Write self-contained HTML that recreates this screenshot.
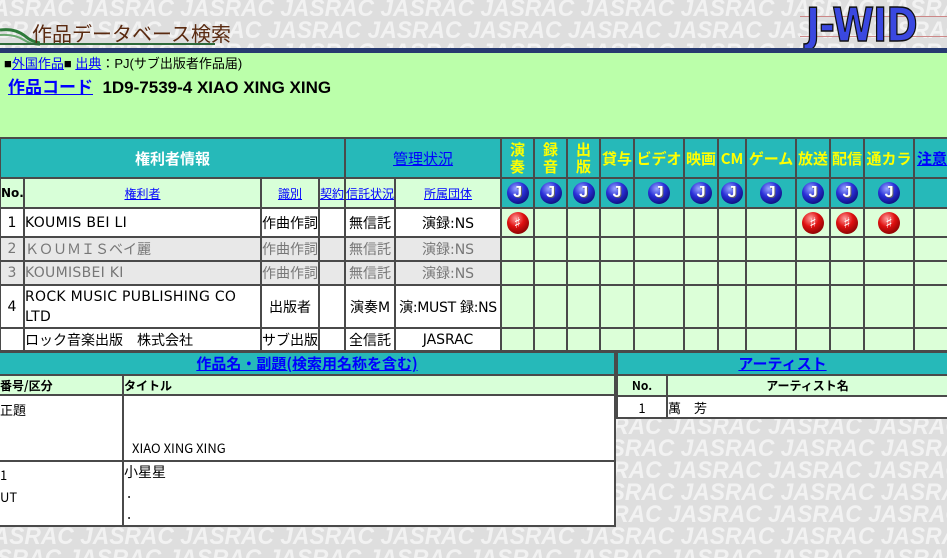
<!DOCTYPE html>
<html><head><meta charset="utf-8">
<style>
*{margin:0;padding:0;box-sizing:border-box}
html,body{width:947px;height:558px;overflow:hidden}
body{position:relative;background:#dedede;font-family:"Liberation Sans","Noto Sans CJK JP",sans-serif;font-size:14px;color:#000}
.bg{position:absolute;left:-20px;top:-2px;width:1100px;color:#f2f2f2;font:italic bold 24px/22px "Liberation Sans",sans-serif;white-space:nowrap;transform:scaleX(0.95);transform-origin:0 0}
.hdr{position:absolute;left:32px;top:20px;font-size:20px;color:#5a2a10;font-family:"Noto Sans CJK JP",sans-serif;line-height:26px}
.hline{position:absolute;left:0;top:43px;width:215px;height:2px;background:#2e6a3a}
.logo{position:absolute;left:806px;top:2px;font:bold 46px/46px "DejaVu Sans",sans-serif;color:#3a48e0;-webkit-text-stroke:1.5px #111;transform:scaleX(0.82);transform-origin:0 0;letter-spacing:-1px}
.navy{position:absolute;left:0;top:48px;width:947px;height:5px;background:#263a70}
.green{position:absolute;left:0;top:53px;width:947px;height:85px;background:#bbffaa}
a{color:#00f;text-decoration:underline}
table{border-collapse:collapse;position:absolute;table-layout:fixed}
td{border:2px solid #4a4a4a;text-align:center;vertical-align:middle;padding:0;overflow:hidden;white-space:nowrap;font-family:"DejaVu Sans","Noto Sans CJK JP",sans-serif;font-size:14px}
.th{background:#26b9b9}
.sub td,td.sub{background:#d8ffd8;font-size:12px}
.w{background:#fff}
.g{background:#e8e8e8;color:#777}
.c{background:#dcffd8}
.y{color:#ff0;font-weight:bold;font-size:15px;line-height:17px;font-family:"Noto Sans CJK JP",sans-serif}
.J{display:inline-block;width:22px;height:22px;border-radius:50%;background:radial-gradient(circle at 40% 30%,#9aa8ff 0,#2a30d8 40%,#0a0a70 85%);color:#fff;font:bold 16px/22px "Liberation Sans",sans-serif;vertical-align:middle;text-shadow:1px 1px 0 #666}
.R{display:inline-block;width:22px;height:22px;border-radius:50%;background:radial-gradient(circle at 40% 30%,#ffa0a0 0,#e01010 40%,#700000 90%);color:#fff;font:bold 15px/22px "DejaVu Sans",sans-serif;vertical-align:middle}
.l{text-align:left}
.n{font-family:"Noto Sans CJK JP",sans-serif;font-size:13px}
.d{letter-spacing:0.3px}
</style></head><body>
<div class="bg">
JASRAC JASRAC JASRAC JASRAC JASRAC JASRAC JASRAC JASRAC JASRAC JASRAC JASRAC<br>
ASRAC JASRAC JASRAC JASRAC JASRAC JASRAC JASRAC JASRAC JASRAC JASRAC JASRAC<br>
JASRAC JASRAC JASRAC JASRAC JASRAC JASRAC JASRAC JASRAC JASRAC JASRAC JASRAC<br>
ASRAC JASRAC JASRAC JASRAC JASRAC JASRAC JASRAC JASRAC JASRAC JASRAC JASRAC<br>
JASRAC JASRAC JASRAC JASRAC JASRAC JASRAC JASRAC JASRAC JASRAC JASRAC JASRAC<br>
ASRAC JASRAC JASRAC JASRAC JASRAC JASRAC JASRAC JASRAC JASRAC JASRAC JASRAC<br>
JASRAC JASRAC JASRAC JASRAC JASRAC JASRAC JASRAC JASRAC JASRAC JASRAC JASRAC<br>
ASRAC JASRAC JASRAC JASRAC JASRAC JASRAC JASRAC JASRAC JASRAC JASRAC JASRAC<br>
JASRAC JASRAC JASRAC JASRAC JASRAC JASRAC JASRAC JASRAC JASRAC JASRAC JASRAC<br>
ASRAC JASRAC JASRAC JASRAC JASRAC JASRAC JASRAC JASRAC JASRAC JASRAC JASRAC<br>
JASRAC JASRAC JASRAC JASRAC JASRAC JASRAC JASRAC JASRAC JASRAC JASRAC JASRAC<br>
ASRAC JASRAC JASRAC JASRAC JASRAC JASRAC JASRAC JASRAC JASRAC JASRAC JASRAC<br>
JASRAC JASRAC JASRAC JASRAC JASRAC JASRAC JASRAC JASRAC JASRAC JASRAC JASRAC<br>
ASRAC JASRAC JASRAC JASRAC JASRAC JASRAC JASRAC JASRAC JASRAC JASRAC JASRAC<br>
JASRAC JASRAC JASRAC JASRAC JASRAC JASRAC JASRAC JASRAC JASRAC JASRAC JASRAC<br>
ASRAC JASRAC JASRAC JASRAC JASRAC JASRAC JASRAC JASRAC JASRAC JASRAC JASRAC<br>
JASRAC JASRAC JASRAC JASRAC JASRAC JASRAC JASRAC JASRAC JASRAC JASRAC JASRAC<br>
ASRAC JASRAC JASRAC JASRAC JASRAC JASRAC JASRAC JASRAC JASRAC JASRAC JASRAC<br>
JASRAC JASRAC JASRAC JASRAC JASRAC JASRAC JASRAC JASRAC JASRAC JASRAC JASRAC<br>
ASRAC JASRAC JASRAC JASRAC JASRAC JASRAC JASRAC JASRAC JASRAC JASRAC JASRAC<br>
JASRAC JASRAC JASRAC JASRAC JASRAC JASRAC JASRAC JASRAC JASRAC JASRAC JASRAC<br>
ASRAC JASRAC JASRAC JASRAC JASRAC JASRAC JASRAC JASRAC JASRAC JASRAC JASRAC<br>
JASRAC JASRAC JASRAC JASRAC JASRAC JASRAC JASRAC JASRAC JASRAC JASRAC JASRAC<br>
ASRAC JASRAC JASRAC JASRAC JASRAC JASRAC JASRAC JASRAC JASRAC JASRAC JASRAC<br>
JASRAC JASRAC JASRAC JASRAC JASRAC JASRAC JASRAC JASRAC JASRAC JASRAC JASRAC<br>
ASRAC JASRAC JASRAC JASRAC JASRAC JASRAC JASRAC JASRAC JASRAC JASRAC JASRAC<br>
</div>
<svg style="position:absolute;left:0;top:26px" width="40" height="20"><path d="M0 4 Q15 2 25 10 Q32 16 40 17" stroke="#2e7a3a" stroke-width="3" fill="none"/><path d="M0 9 Q15 8 24 14 Q30 18 40 19" stroke="#6aa870" stroke-width="2" fill="none"/></svg>
<div class="hdr">作品データベース検索</div>
<div class="hline"></div>
<div style="position:absolute;left:800px;top:16px;width:147px;height:1px;background:#c88"></div>
<div style="position:absolute;left:800px;top:36px;width:147px;height:1px;background:#c88"></div>
<div class="logo">J-WID</div>
<div class="navy"></div>
<div class="green"></div>
<div style="position:absolute;left:4px;top:55px;font-size:13px;line-height:18px">■<a href="#">外国作品</a>■ <a href="#">出典</a>：PJ(サブ出版者作品届)</div>
<div style="position:absolute;left:8px;top:77px;font-size:17px;font-weight:bold;line-height:22px"><a href="#">作品コード</a>&nbsp; 1D9-7539-4 XIAO XING XING</div>

<table style="left:-1px;top:137px;width:950px">
<colgroup><col style="width:24px"><col style="width:237px"><col style="width:58px"><col style="width:26px"><col style="width:50px"><col style="width:106px"><col style="width:33px"><col style="width:33px"><col style="width:33px"><col style="width:34px"><col style="width:50px"><col style="width:34px"><col style="width:28px"><col style="width:50px"><col style="width:34px"><col style="width:34px"><col style="width:50px"><col style="width:36px"></colgroup>
<tr style="height:40px" class="th"><td colspan="4" class="n" style="color:#fff;font-weight:bold;font-size:15px">権利者情報</td><td colspan="2" class="n" style="font-size:15px"><a href="#">管理状況</a></td><td class="y">演<br>奏</td><td class="y">録<br>音</td><td class="y">出<br>版</td><td class="y">貸与</td><td class="y">ビデオ</td><td class="y">映画</td><td class="y">CM</td><td class="y">ゲーム</td><td class="y">放送</td><td class="y">配信</td><td class="y">通カラ</td><td class="n" style="font-weight:bold;font-size:15px"><a href="#">注意</a></td></tr>
<tr style="height:30px"><td class="sub" style="font-weight:bold">No.</td><td class="sub"><a href="#">権利者</a></td><td class="sub"><a href="#">識別</a></td><td class="sub"><a href="#">契約</a></td><td class="sub"><a href="#">信託状況</a></td><td class="sub"><a href="#">所属団体</a></td><td class="th"><span class="J">J</span></td><td class="th"><span class="J">J</span></td><td class="th"><span class="J">J</span></td><td class="th"><span class="J">J</span></td><td class="th"><span class="J">J</span></td><td class="th"><span class="J">J</span></td><td class="th"><span class="J">J</span></td><td class="th"><span class="J">J</span></td><td class="th"><span class="J">J</span></td><td class="th"><span class="J">J</span></td><td class="th"><span class="J">J</span></td><td class="th"></td></tr>
<tr style="height:29px" class="w"><td>1</td><td class="l d">KOUMIS BEI LI</td><td>作曲作詞</td><td></td><td>無信託</td><td>演録:NS</td><td class="c"><span class="R">♯</span></td><td class="c"></td><td class="c"></td><td class="c"></td><td class="c"></td><td class="c"></td><td class="c"></td><td class="c"></td><td class="c"><span class="R">♯</span></td><td class="c"><span class="R">♯</span></td><td class="c"><span class="R">♯</span></td><td class="c"></td></tr>
<tr style="height:24px" class="g"><td>2</td><td class="l">ＫＯＵＭＩＳベイ麗</td><td>作曲作詞</td><td></td><td>無信託</td><td>演録:NS</td><td class="c"></td><td class="c"></td><td class="c"></td><td class="c"></td><td class="c"></td><td class="c"></td><td class="c"></td><td class="c"></td><td class="c"></td><td class="c"></td><td class="c"></td><td class="c"></td></tr>
<tr style="height:24px" class="g"><td>3</td><td class="l d">KOUMISBEI KI</td><td>作曲作詞</td><td></td><td>無信託</td><td>演録:NS</td><td class="c"></td><td class="c"></td><td class="c"></td><td class="c"></td><td class="c"></td><td class="c"></td><td class="c"></td><td class="c"></td><td class="c"></td><td class="c"></td><td class="c"></td><td class="c"></td></tr>
<tr style="height:43px" class="w"><td>4</td><td class="l d" style="white-space:normal;line-height:20px;padding-right:12px">ROCK MUSIC PUBLISHING CO LTD</td><td>出版者</td><td></td><td>演奏M</td><td style="letter-spacing:-0.3px">演:MUST 録:NS</td><td class="c"></td><td class="c"></td><td class="c"></td><td class="c"></td><td class="c"></td><td class="c"></td><td class="c"></td><td class="c"></td><td class="c"></td><td class="c"></td><td class="c"></td><td class="c"></td></tr>
<tr style="height:23px" class="w"><td></td><td class="l">ロック音楽出版　株式会社</td><td>サブ出版</td><td></td><td>全信託</td><td>JASRAC</td><td class="c"></td><td class="c"></td><td class="c"></td><td class="c"></td><td class="c"></td><td class="c"></td><td class="c"></td><td class="c"></td><td class="c"></td><td class="c"></td><td class="c"></td><td class="c"></td></tr>
</table>

<table style="left:-2px;top:351px;width:618px">
<colgroup><col style="width:124px"><col></colgroup>
<tr style="height:21px" class="th"><td colspan="2" class="n" style="font-weight:bold;font-size:15px"><a href="#">作品名・副題(検索用名称を含む)</a></td></tr>
<tr style="height:20px" class="sub"><td class="l n" style="font-weight:bold">番号/区分</td><td class="l n" style="font-weight:bold">タイトル</td></tr>
<tr style="height:66px" class="w"><td class="l n" style="vertical-align:top;padding-top:4px">正題</td><td class="l n" style="vertical-align:bottom;padding:0 0 3px 8px">XIAO XING XING</td></tr>
<tr style="height:64px" class="w"><td class="l n" style="vertical-align:top;line-height:22px;padding-top:2px">1<br>UT</td><td class="l n" style="vertical-align:top;line-height:21px;font-size:14px">小星星<br>&nbsp;.<br>&nbsp;.</td></tr>
</table>

<table style="left:616px;top:351px;width:333px">
<colgroup><col style="width:50px"><col></colgroup>
<tr style="height:21px" class="th"><td colspan="2" class="n" style="font-size:15px;font-weight:bold"><a href="#">アーティスト</a></td></tr>
<tr style="height:21px" class="sub"><td class="n" style="font-weight:bold">No.</td><td class="n" style="font-weight:bold">アーティスト名</td></tr>
<tr style="height:22px" class="w"><td class="n">1</td><td class="l n">萬　芳</td></tr>
</table>
</body></html>
